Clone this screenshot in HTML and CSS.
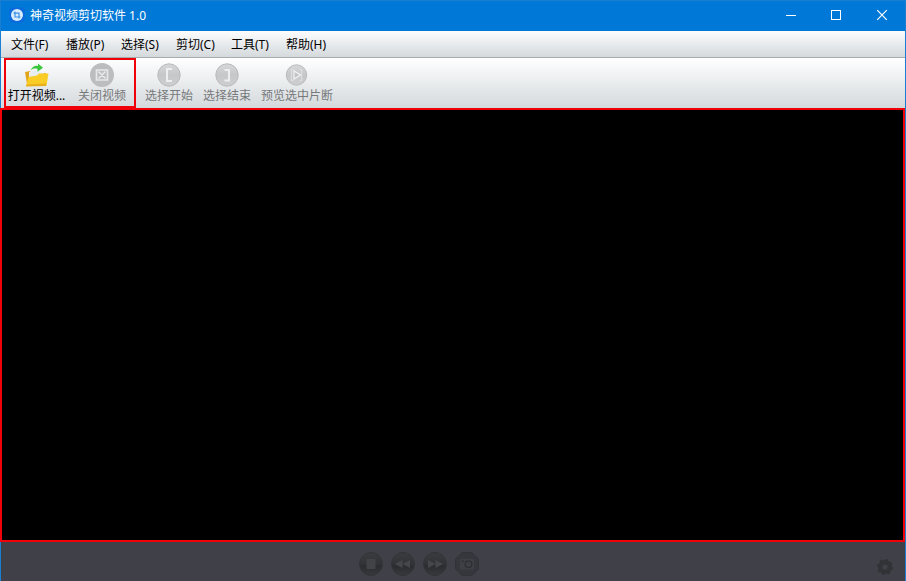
FILE: index.html
```html
<!DOCTYPE html>
<html lang="zh-CN">
<head>
    <meta charset="UTF-8">
    <meta name="viewport" content="width=device-width, initial-scale=1.0">
    <title>神奇视频剪切软件 1.0</title>
    <link rel="stylesheet" href="styles.css">
</head>
<body>
    <div class="window">
        <header class="title-bar">
            <svg class="app-icon" width="16" height="16" viewBox="0 0 16 16">
                <rect x="0.5" y="0.5" width="15" height="15" rx="4" fill="#0b69dc"/>
                <circle cx="8" cy="8" r="6" fill="#d9edff"/>
                <path d="M4.500 6.200H10v5.300M6 4.500V10h5.500" fill="none" stroke="#3d90e6" stroke-width="1.200"/>
            </svg>
            <span class="title">神奇视频剪切软件 1.0</span>
            <div class="window-buttons">
                <svg width="46" height="30" viewBox="0 0 46 30"><path d="M18 14.500h10" stroke="#fff"/></svg>
                <svg width="46" height="30" viewBox="0 0 46 30"><rect x="17.500" y="9.500" width="9" height="9" fill="none" stroke="#fff"/></svg>
                <svg width="46" height="30" viewBox="0 0 46 30"><path d="M17.200 9.200l9.600 9.600M26.800 9.200l-9.600 9.600" stroke="#fff" stroke-width="1.200"/></svg>
            </div>
        </header>

        <nav class="menu-bar">
            <span>文件(F)</span>
            <span>播放(P)</span>
            <span>选择(S)</span>
            <span>剪切(C)</span>
            <span>工具(T)</span>
            <span>帮助(H)</span>
        </nav>

        <div class="toolbar">
            <div class="tool-group marked">
                <div class="tool tool-open">
                    <svg width="28" height="26" viewBox="0 0 28 26">
                        <path d="M2 10l5-1 1 2h15v11H4z" fill="#e0a51c"/>
                        <path d="M6 10l7-1.500 9 3.500v5H6z" fill="#e9eef2"/>
                        <path d="M3 24l2.500-9 8.500-1.500 2-2h9.500l-2 12z" fill="#f9cd25"/>
                        <path d="M3 24.500l20-.5.500-2.500-20 1z" fill="#e8b01c"/>
                        <path d="M7.500 8.500c1.500-4 5-5.500 7.500-4.500V1.500l5 4.200-5.500 4V7C12 6 9.500 6.500 7.500 8.500z" fill="#3cc63c"/>
                    </svg>
                    <span>打开视频...</span>
                </div>
                <div class="tool disabled">
                    <svg width="26" height="26" viewBox="0 0 26 26">
                        <circle cx="13" cy="13" r="12" fill="#bbbdbe"/>
                        <path d="M7.500 8h11v10h-11zM9.500 9.500l7 7M16.500 9.500l-7 7" fill="none" stroke="#e6e8e9" stroke-width="1.700"/>
                    </svg>
                    <span>关闭视频</span>
                </div>
            </div>
            <div class="tool-group">
                <div class="tool disabled">
                    <svg width="26" height="26" viewBox="0 0 26 26">
                        <circle cx="13" cy="13" r="11.200" fill="url(#disc)" stroke="#b9bbbc"/>
                        <path d="M16 7h-5v12h5" fill="none" stroke="#eceeef" stroke-width="2"/>
                    </svg>
                    <span>选择开始</span>
                </div>
                <div class="tool disabled">
                    <svg width="26" height="26" viewBox="0 0 26 26">
                        <circle cx="13" cy="13" r="11.200" fill="url(#disc)" stroke="#b9bbbc"/>
                        <path d="M10.500 8H15v10.500h-4.500" fill="none" stroke="#eceeef" stroke-width="2"/>
                    </svg>
                    <span>选择结束</span>
                </div>
                <div class="tool disabled">
                    <svg width="26" height="26" viewBox="0 0 26 26">
                        <circle cx="12.500" cy="13" r="10.200" fill="url(#disc)" stroke="#b9bbbc"/>
                        <path d="M9.500 7.500h-2v11h2M15.500 7.500h2v11h-2" fill="none" stroke="#dcdedf" stroke-width="1.200"/>
                        <path d="M10 9v8l6.500-4z" fill="#c0c2c3" stroke="#eff1f1" stroke-width="1.300"/>
                    </svg>
                    <span>预览选中片断</span>
                </div>
            </div>
        </div>

        <main class="video-area"></main>

        <footer class="player-bar">
            <div class="player-buttons">
                <svg width="24" height="24" viewBox="0 0 24 24">
                    <circle cx="12" cy="12" r="11.500" fill="url(#ball)" stroke="#333438"/>
                    <rect x="7.500" y="7" width="9" height="10" rx="1" fill="#424347"/>
                </svg>
                <svg width="24" height="24" viewBox="0 0 24 24">
                    <circle cx="12" cy="12" r="11.500" fill="url(#ball)" stroke="#333438"/>
                    <path d="M11.500 8v8L4 12zM19 8v8L11.500 12z" fill="#46474b"/>
                </svg>
                <svg width="24" height="24" viewBox="0 0 24 24">
                    <circle cx="12" cy="12" r="11.500" fill="url(#ball)" stroke="#333438"/>
                    <path d="M5 8v8l7.500-4zM12.500 8v8L20 12z" fill="#46474b"/>
                </svg>
                <svg width="24" height="24" viewBox="0 0 24 24">
                    <path d="M7 .5h10L23.500 7v10L17 23.500H7L.5 17V7z" fill="#36373c" stroke="#323338"/>
                    <rect x="5" y="7" width="14" height="10.500" rx="1" fill="#3f4045"/>
                    <circle cx="13.500" cy="12.300" r="3.300" fill="#3f4045" stroke="#2f3034" stroke-width="1.500"/>
                    <rect x="6.500" y="8.500" width="2.500" height="1.500" fill="#303135"/>
                </svg>
            </div>
            <svg class="settings" width="18" height="18" viewBox="0 0 18 18">
                <circle cx="9" cy="9" r="4.800" fill="none" stroke="#323337" stroke-width="4.500"/>
                <circle cx="9" cy="9" r="7.200" fill="none" stroke="#323337" stroke-width="1.800" stroke-dasharray="2.827"/>
            </svg>
            <svg width="0" height="0" class="defs">
                <linearGradient id="ball" x1="0" y1="0" x2="0" y2="1">
                    <stop offset="0" stop-color="#3b3c40"/>
                    <stop offset="0.5" stop-color="#323337"/>
                    <stop offset="0.6" stop-color="#2b2c2f"/>
                    <stop offset="1" stop-color="#393a3e"/>
                </linearGradient>
                <linearGradient id="disc" x1="0" y1="0" x2="0" y2="1">
                    <stop offset="0" stop-color="#d6d8d9"/>
                    <stop offset="0.5" stop-color="#c5c7c8"/>
                    <stop offset="1" stop-color="#cdcfd0"/>
                </linearGradient>
            </svg>
        </footer>
    </div>
</body>
</html>
```

FILE: styles.css
```css
* {
    box-sizing: border-box;
}

body {
    margin: 0;
    font-family: "Noto Sans", "Noto Sans CJK SC", sans-serif;
    font-size: 12px;
    color: #000;
    overflow: hidden;
}

svg {
    display: block;
    flex-shrink: 0;
}

.window {
    display: flex;
    flex-direction: column;
    height: 581px;
    border: 1px solid #1a7fd0;
    border-bottom: none;
    background-color: #404048;
}

.title-bar {
    display: flex;
    align-items: center;
    height: 30px;
    padding-left: 8px;
    background-color: #0078d7;
    color: #fff;
}

.app-icon {
    margin-bottom: 2px;
}

.title {
    margin-left: 5px;
    line-height: 18px;
}

.window-buttons {
    display: flex;
    margin-left: auto;
    margin-right: -1px;
}

.menu-bar {
    display: flex;
    gap: 16px;
    height: 27px;
    padding-left: 10px;
    line-height: 27px;
    border-bottom: 1px solid #a9abad;
    background: linear-gradient(#fdfdfe, #d4d9dc);
}

.menu-bar span {
    width: 39px;
    white-space: nowrap;
}

.toolbar {
    display: flex;
    height: 50px;
    padding-left: 3px;
    background: linear-gradient(#fff, #d4d9dc);
}

.tool-group {
    display: flex;
    gap: 10px;
    padding: 4px 0 0 9px;
}

.marked {
    gap: 13px;
    width: 132px;
    padding: 2px 0 0 2px;
    border: 2px solid #f00008;
}

.tool {
    display: flex;
    flex-direction: column;
    align-items: center;
    white-space: nowrap;
    line-height: 16px;
}

.tool-open {
    width: 57px;
}

.disabled {
    color: #77797b;
}

/* the frame runs over the window's side borders */
.video-area {
    flex: 1;
    margin: 0 0 0 -1px;
    border: 2px solid #f00008;
    background-color: #000;
}

.player-bar {
    display: flex;
    align-items: center;
    justify-content: space-between;
    height: 39px;
    padding: 4px 11px 0 358px;
}

.player-buttons {
    display: flex;
    gap: 8px;
}

.settings {
    margin: 7px 0 0 auto;
}

.defs {
    position: absolute;
}
```
